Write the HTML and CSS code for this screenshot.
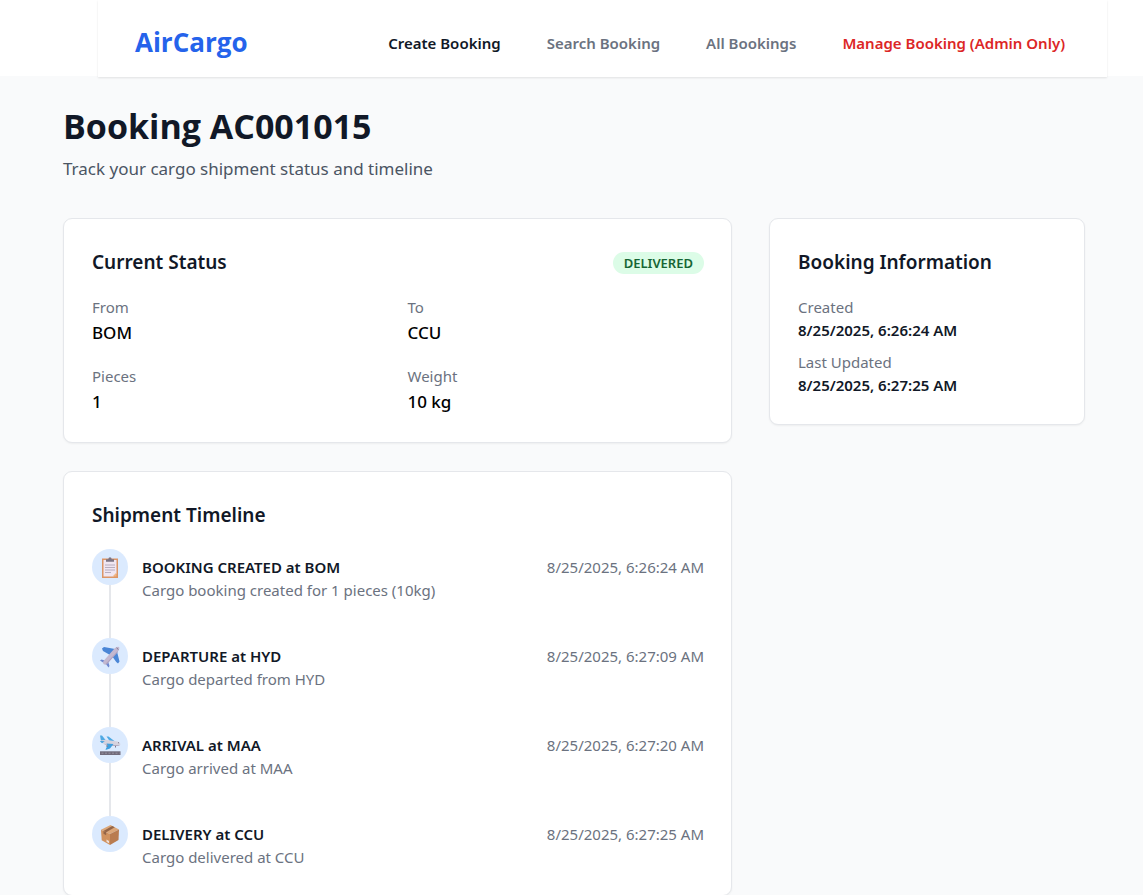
FILE: index.html
```html
<!DOCTYPE html>
<html lang="en">
<head>
<meta charset="utf-8">
<meta name="viewport" content="width=device-width, initial-scale=1">
<title>AirCargo - Booking AC001015</title>
<link rel="stylesheet" href="styles.css">
</head>
<body>
<header class="site-header">
  <nav class="navbar">
    <a class="brand" href="#">AirCargo</a>
    <div class="nav-links">
      <a class="nav-link active" href="#">Create Booking</a>
      <a class="nav-link" href="#">Search Booking</a>
      <a class="nav-link" href="#">All Bookings</a>
      <a class="nav-link admin" href="#">Manage Booking (Admin Only)</a>
    </div>
  </nav>
</header>
<main class="page">
  <h1 class="page-title">Booking AC001015</h1>
  <p class="page-subtitle">Track your cargo shipment status and timeline</p>
  <div class="layout">
    <div class="main-column">
      <section class="card">
        <div class="card-head">
          <h2 class="card-title">Current Status</h2>
          <span class="badge">DELIVERED</span>
        </div>
        <dl class="facts">
          <div><dt class="label">From</dt><dd class="value">BOM</dd></div>
          <div><dt class="label">To</dt><dd class="value">CCU</dd></div>
          <div><dt class="label">Pieces</dt><dd class="value">1</dd></div>
          <div><dt class="label">Weight</dt><dd class="value">10 kg</dd></div>
        </dl>
      </section>
      <section class="card">
        <div class="card-head">
          <h2 class="card-title">Shipment Timeline</h2>
        </div>
        <ol class="timeline">
          <li class="event">
            <div class="marker"><span class="marker-icon">
              <svg viewBox="0 0 36 36" aria-hidden="true">
                <path fill="#dc9566" d="M10 9.500h16v19.500H10z"/>
                <path fill="#f0e6f2" d="M11.500 11h13v13.500L21.500 27.500h-10z"/>
                <path fill="#f0b584" d="M24.500 23.500v4h-4z"/>
                <path fill="#7b7484" d="M14 12.800v-2.500h2.300q.2-2 1.700-2t1.700 2H22v2.500z"/>
                <path stroke="#b0a7ba" stroke-width=".9" d="M13 16h10M13 18.500h10M13 21h10M13 23.500h6"/>
              </svg></span></div>
            <div class="event-body">
              <div class="event-row"><h3 class="event-title">BOOKING CREATED at BOM</h3><time class="event-time">8/25/2025, 6:26:24 AM</time></div>
              <p class="event-text">Cargo booking created for 1 pieces (10kg)</p>
            </div>
          </li>
          <li class="event">
            <div class="marker"><span class="marker-icon">
              <svg viewBox="0 0 36 36" aria-hidden="true">
                <path fill="#4a86d6" d="M10 10.500l2-1.500 11 2-5 6-7-4zM25 13.500l2.500 10-1.500 2-1.800-1.500-4.500-6.500z"/>
                <path fill="#6f88d0" d="M8 22.500l1.500-1 5 1.500-2 2.500zM16.500 29.500l1-1.500-1.500-5-2.500 2.500z"/>
                <path fill="#c3b8d0" d="M11.500 26q-1-1.500 0-3L22.500 10.500q2.500-2.500 4.700-1.500 1 2.200-1.500 4.800L15 26q-2 1.200-3.500 0z"/>
                <path fill="#ada0bf" d="M13 26.400L26 12.800l-.5 1.800L15 26z"/>
                <path stroke="#7d7590" stroke-width="1" d="M24.500 9.800l2 1.900"/>
              </svg></span></div>
            <div class="event-body">
              <div class="event-row"><h3 class="event-title">DEPARTURE at HYD</h3><time class="event-time">8/25/2025, 6:27:09 AM</time></div>
              <p class="event-text">Cargo departed from HYD</p>
            </div>
          </li>
          <li class="event">
            <div class="marker"><span class="marker-icon">
              <svg viewBox="0 0 36 36" aria-hidden="true">
                <path fill="#706b7b" d="M8 24.300h20.500V28H8z"/>
                <path stroke="#a09aa9" stroke-width=".8" stroke-dasharray="2 1.500" d="M9.500 26.200h18"/>
                <path fill="#4fa9e4" d="M8 8.500h2l4 5-5 .5zM14.500 9.500h2l6.500 5-4 1.500z"/>
                <path fill="#d5d2de" d="M8.500 13.500l5-.8 12 1.800q3 1 3 2.700-.5 1.500-3.500 1.500l-9-.7q-6-1-7.500-4.500z"/>
                <path fill="#b0a9bf" d="M11.500 16.800q6 1.500 16.500 1.200-1 1.200-5 1-8-.2-11.500-2.200z"/>
                <path fill="#3f9fdf" d="M14.500 16.500l7 .5-3.500 4.500-4.500 1.500.5-1.500 1.500-3zM7.800 14l5 .3-2.800 2z"/>
                <path stroke="#7b7588" stroke-width="1" d="M23.500 19v1.500M15 18v2M26 15.600l1 .3"/>
              </svg></span></div>
            <div class="event-body">
              <div class="event-row"><h3 class="event-title">ARRIVAL at MAA</h3><time class="event-time">8/25/2025, 6:27:20 AM</time></div>
              <p class="event-text">Cargo arrived at MAA</p>
            </div>
          </li>
          <li class="event">
            <div class="marker"><span class="marker-icon">
              <svg viewBox="0 0 36 36" aria-hidden="true">
                <path fill="#dba678" d="M18.500 9L27 13.500 18 18 9 13.800z"/>
                <path fill="#d0925f" d="M9 13.800L18 18v11l-8.300-4.800z"/>
                <path fill="#b97c50" d="M27 13.500L18 18v11l8.500-5z"/>
                <path fill="#946547" d="M20.200 9.900l2.600 1.400-8.600 4.900-2.700-1.300z"/>
                <path fill="#946547" d="M11.500 14.900l2.700 1.300v3l-2.700-1.500z"/>
                <path fill="#eee1dc" d="M14.500 23.500l2.500 1.400v2.300l-2.500-1.400z"/>
              </svg></span></div>
            <div class="event-body">
              <div class="event-row"><h3 class="event-title">DELIVERY at CCU</h3><time class="event-time">8/25/2025, 6:27:25 AM</time></div>
              <p class="event-text">Cargo delivered at CCU</p>
            </div>
          </li>
        </ol>
      </section>
    </div>
    <aside class="card">
      <div class="card-head">
        <h2 class="card-title">Booking Information</h2>
      </div>
      <dl class="info">
        <div><dt class="label">Created</dt><dd class="date">8/25/2025, 6:26:24 AM</dd></div>
        <div><dt class="label">Last Updated</dt><dd class="date">8/25/2025, 6:27:25 AM</dd></div>
      </dl>
    </aside>
  </div>
</main>
</body>
</html>
```
FILE: styles.css
```css
* {
  box-sizing: border-box;
  margin: 0;
  padding: 0;
}

body {
  background: #f9fafb;
  color: #111827;
  font-family: "Segoe UI", "Noto Sans", "Open Sans", sans-serif;
  font-size: 15px;
  line-height: 23px;
}

.site-header {
  background: #fff;
  height: 76px;
}

.navbar {
  display: flex;
  align-items: center;
  justify-content: space-between;
  height: 77px;
  margin: 0 36px 0 98px;
  padding: 10px 42px 0 37px;
  background: #fff;
  box-shadow: 0 1px 2px rgba(0, 0, 0, 0.1);
}

.brand {
  color: #2563eb;
  font-family: "Segoe UI", "Open Sans", sans-serif;
  font-size: 26px;
  font-weight: 700;
  line-height: 38px;
  margin-bottom: 4px;
  text-decoration: none;
}

.nav-links {
  display: flex;
  gap: 46px;
}

.nav-link {
  color: #6b7280;
  font-weight: 600;
  text-decoration: none;
  white-space: nowrap;
}

.nav-link.active {
  color: #111827;
}

.nav-link.admin {
  color: #dc2626;
}

.page {
  padding: 29px 58px 0 63px;
}

.page-title {
  font-family: "Segoe UI", "Open Sans", sans-serif;
  font-size: 34px;
  font-weight: 700;
  line-height: 42px;
}

.page-subtitle {
  margin: 9px 0 36px;
  color: #4b5563;
  font-size: 17px;
  line-height: 26px;
}

.layout {
  display: grid;
  grid-template-columns: 669fr 316fr;
  align-items: start;
  gap: 37px;
}

.main-column {
  display: grid;
  gap: 28px;
}

.card {
  padding: 28px 27px 27px 28px;
  background: #fff;
  border: 1px solid #e5e7eb;
  border-radius: 9px;
  box-shadow: 0 1px 2px rgba(0, 0, 0, 0.05);
}

.card-head {
  display: flex;
  align-items: center;
  justify-content: space-between;
  margin-bottom: 18px;
}

.card-title {
  font-size: 19px;
  font-weight: 600;
  line-height: 31px;
}

.badge {
  padding: 0 11px;
  border-radius: 11px;
  background: #dcfce7;
  color: #166534;
  font-size: 13px;
  font-weight: 600;
  line-height: 22px;
}

.facts {
  display: grid;
  grid-template-columns: 1fr 1fr;
  gap: 19px;
}

.label {
  color: #6b7280;
}

.value {
  color: #000;
  font-size: 17px;
  font-weight: 500;
  line-height: 27px;
}

.info {
  display: grid;
  gap: 9px;
}

.date {
  font-weight: 600;
}

.timeline {
  list-style: none;
}

.event {
  display: flex;
  gap: 14px;
}

.marker {
  display: flex;
  flex-direction: column;
  align-items: center;
}

.marker-icon {
  width: 36px;
  height: 36px;
  border-radius: 50%;
  background: #dbeafe;
}

.marker-icon svg {
  display: block;
}

.event:not(:last-child) .marker::after {
  content: "";
  flex: 1;
  width: 2px;
  background: #e5e7eb;
}

.event-body {
  flex: 1;
  padding: 7px 0 37px;
}

.event:last-child .event-body {
  padding-bottom: 0;
}

.event-row {
  display: flex;
  justify-content: space-between;
}

.event-title {
  font-size: 15px;
  font-weight: 600;
}

.event-time,
.event-text {
  color: #6b7280;
}

.event-text {
  line-height: 22px;
}
```
